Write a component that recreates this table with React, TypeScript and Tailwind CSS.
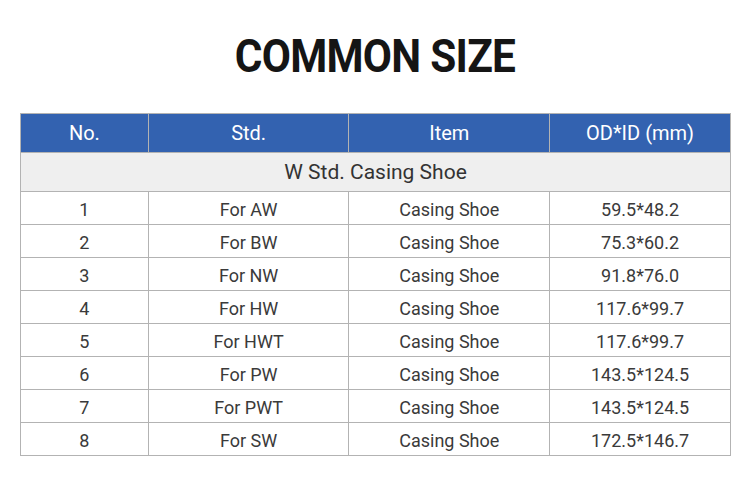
const ROWS = [
  ["1", "For AW", "Casing Shoe", "59.5*48.2"],
  ["2", "For BW", "Casing Shoe", "75.3*60.2"],
  ["3", "For NW", "Casing Shoe", "91.8*76.0"],
  ["4", "For HW", "Casing Shoe", "117.6*99.7"],
  ["5", "For HWT", "Casing Shoe", "117.6*99.7"],
  ["6", "For PW", "Casing Shoe", "143.5*124.5"],
  ["7", "For PWT", "Casing Shoe", "143.5*124.5"],
  ["8", "For SW", "Casing Shoe", "172.5*146.7"],
];

export default function App() {
  return (
    <div
      className="w-[750px] h-[501px] bg-white pt-[28px]"
      style={{ fontFamily: "Roboto, 'Liberation Sans', sans-serif" }}
    >
      <h1 className="text-center text-[47px] leading-[56px] font-bold tracking-[-0.8px] text-[#151515] scale-x-[0.9]">
        COMMON SIZE
      </h1>

      <div className="px-[20px] mt-[29px]">
        <table className="w-[711px] border-collapse text-center">
          <colgroup>
            <col className="w-[128px]" />
            <col className="w-[201px]" />
            <col className="w-[201px]" />
            <col className="w-[181px]" />
          </colgroup>
          <thead>
            <tr className="h-[39px] bg-[#3362b0] text-white text-[20px]">
              {["No.", "Std.", "Item", "OD*ID (mm)"].map((h) => (
                <th key={h} className="border border-[#b3b3b3] font-normal p-0">
                  {h}
                </th>
              ))}
            </tr>
          </thead>
          <tbody>
            <tr className="h-[39px] bg-[#efefef] text-[#333] text-[21px]">
              <td colSpan={4} className="border border-[#b3b3b3] p-0 pt-[1px]">
                W Std. Casing Shoe
              </td>
            </tr>
            {ROWS.map((r) => (
              <tr key={r[0]} className="h-[33px] text-[#3a3a3a] text-[18px]">
                {r.map((c, i) => (
                  <td key={i} className="border border-[#b3b3b3] p-0 pt-[3px]">
                    {c}
                  </td>
                ))}
              </tr>
            ))}
          </tbody>
        </table>
      </div>
    </div>
  );
}
